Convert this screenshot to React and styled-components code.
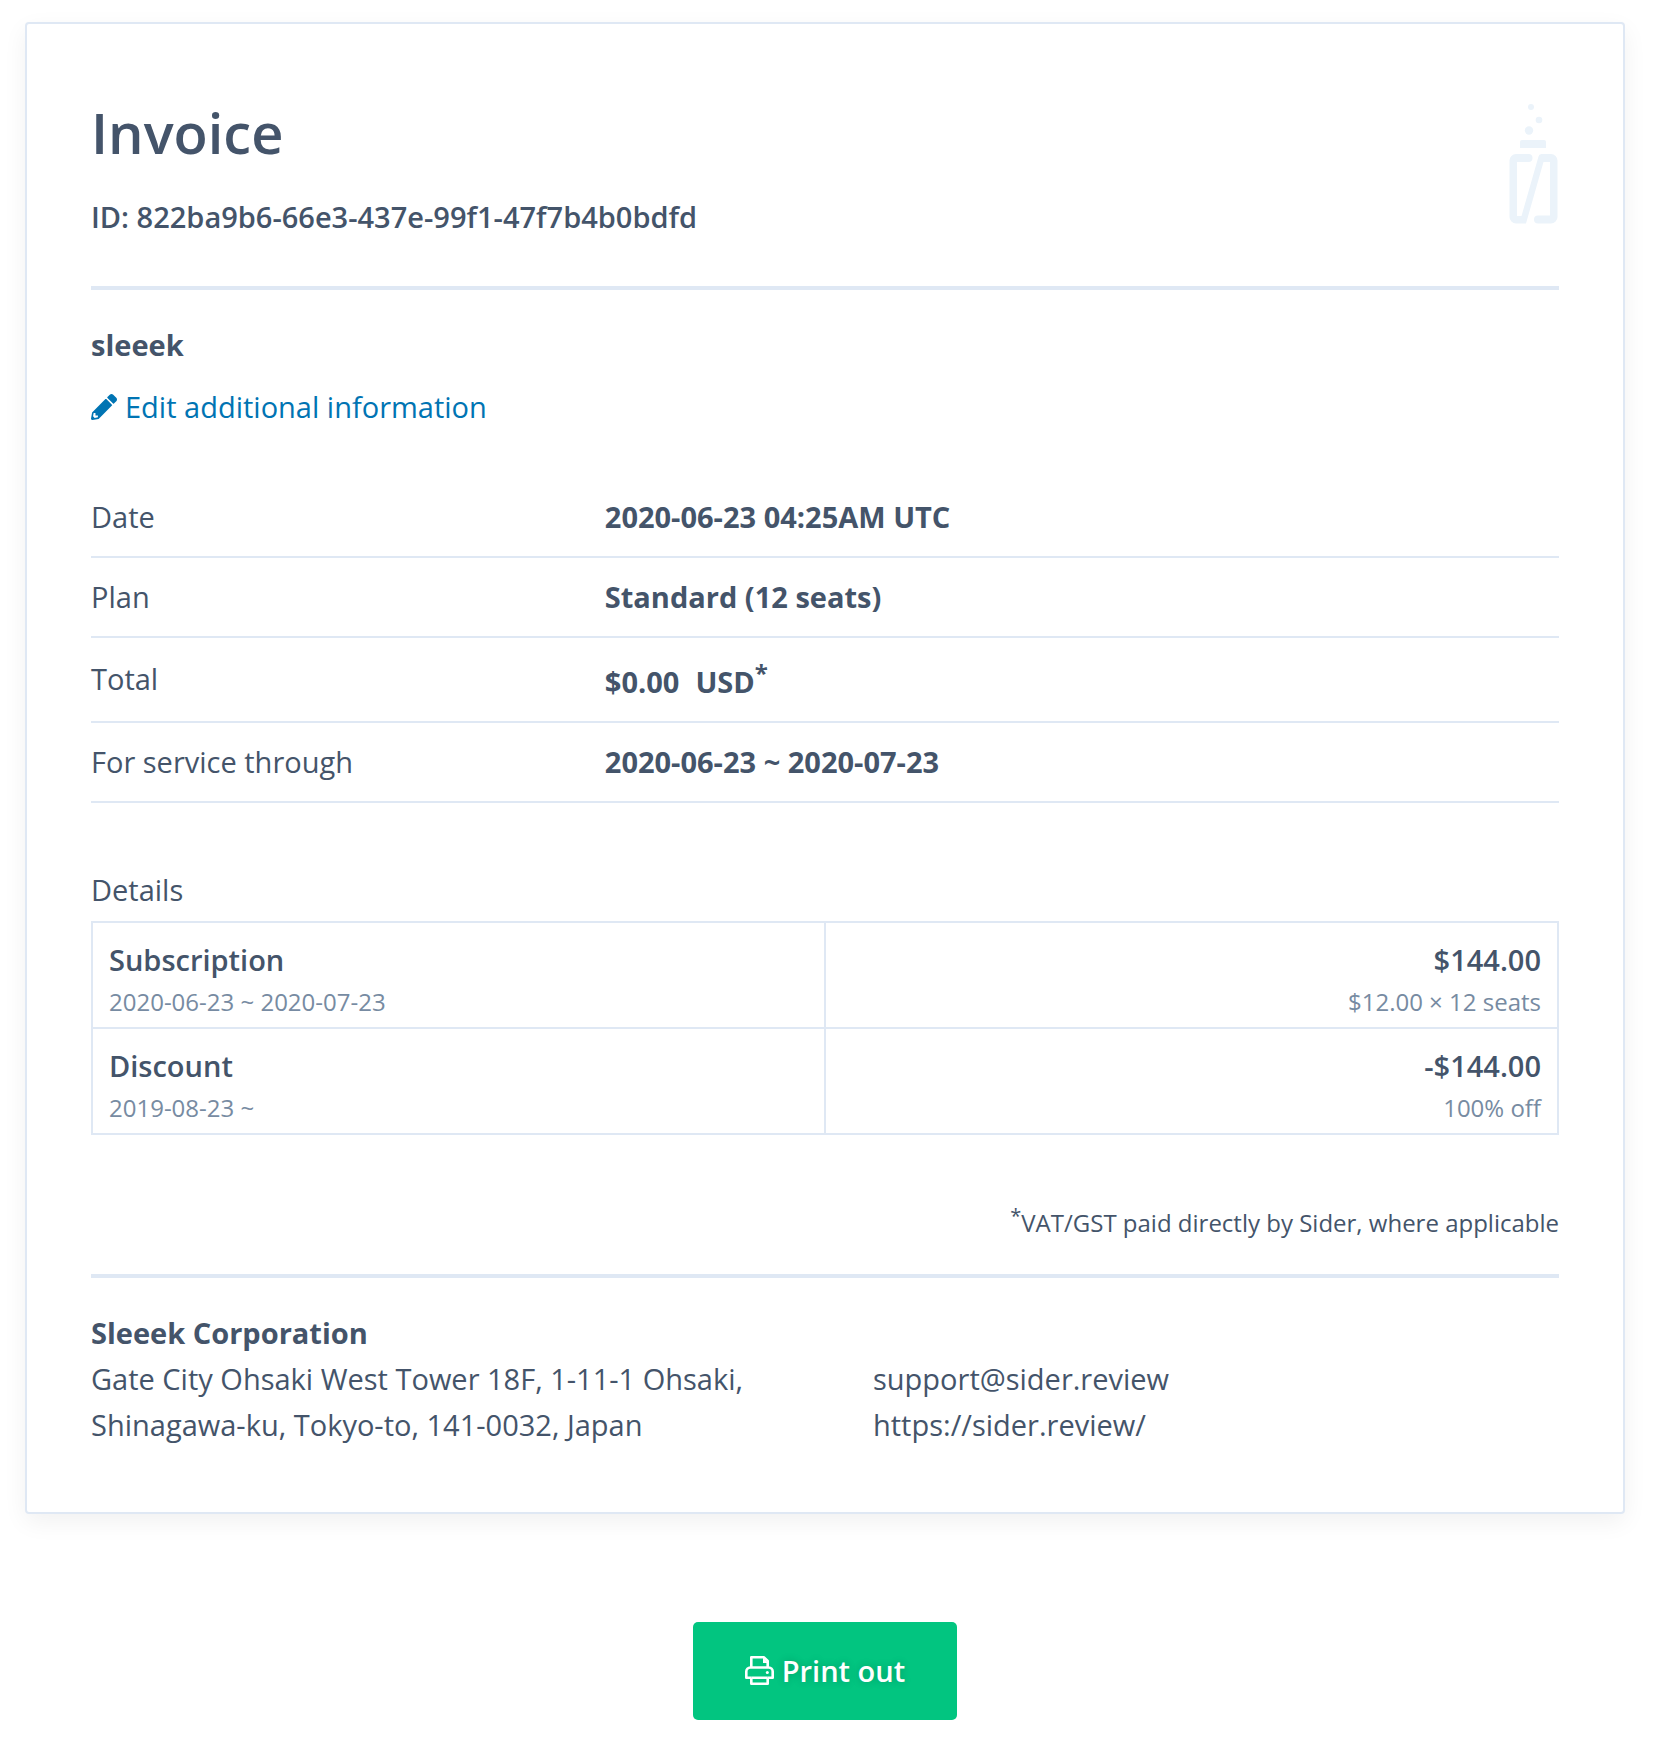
import React from "react";
import styled, { createGlobalStyle } from "styled-components";

const ink = "#44546a";
const muted = "#778ba2";
const line = "#dfe8f4";

const GlobalStyle = createGlobalStyle`
  *, *::before, *::after { box-sizing: border-box; }
  body {
    margin: 0;
    background: #fff;
    color: ${ink};
    font-family: "Open Sans", "Noto Sans", sans-serif;
    font-size: 29px;
    line-height: 46px;
  }
  h1, h2, p, dl, dd, address { margin: 0; font: inherit; }
`;

const Page = styled.main`
  display: flex;
  flex-direction: column;
  align-items: center;
  padding: 22px 35px 22px 25px;
`;

const Card = styled.article`
  width: 100%;
  padding: 78px 64px 64px;
  border: 2px solid ${line};
  border-radius: 4px;
  background: #fff;
  box-shadow: 0 8px 24px rgba(0, 0, 0, 0.06);
`;

const Header = styled.header`
  display: flex;
  justify-content: space-between;
  align-items: flex-start;
  padding-bottom: 46px;
  border-bottom: 4px solid ${line};
`;

const Title = styled.h1`
  && {
    margin-bottom: 32px;
    font-size: 56px;
    line-height: 60px;
    font-weight: 600;
  }
`;

const InvoiceId = styled.p`
  && { font-weight: 600; }
`;

const Logo = styled.svg`
  width: 50px;
  height: 122px;
  fill: #ebf3fa;
`;

const Customer = styled.section`
  display: flex;
  flex-direction: column;
  align-items: flex-start;
  gap: 16px;
  padding: 32px 0 48px;
`;

const Name = styled.h2`
  && { font-weight: 700; }
`;

const EditLink = styled.a`
  display: inline-flex;
  align-items: center;
  gap: 8px;
  color: #0074b3;
  text-decoration: none;
  svg { width: 26px; height: 26px; }
`;

const Facts = styled.dl`
  && { margin-bottom: 64px; }
`;

const Fact = styled.div`
  display: grid;
  grid-template-columns: 35% 1fr;
  align-items: center;
  padding: 16px 0;
  border-bottom: 2px solid ${line};
`;

const FactValue = styled.dd`
  && { font-weight: 700; }
`;

const Currency = styled.span`
  margin-left: 16px;
`;

const Mark = styled.sup`
  font-size: ${(p) => (p.$small ? 20 : 24)}px;
  line-height: ${(p) => (p.$small ? 32 : 38)}px;
  vertical-align: super;
`;

const DetailTable = styled.table`
  width: 100%;
  table-layout: fixed;
  border-collapse: collapse;
  caption {
    padding-bottom: 8px;
    text-align: left;
  }
`;

const Cell = styled.td`
  padding: 14px 16px 6px;
  border: 2px solid ${line};
  text-align: ${(p) => (p.$end ? "right" : "left")};
`;

const CellMain = styled.div`
  font-weight: 600;
`;

const CellNote = styled.div`
  color: ${muted};
  font-size: 24px;
  line-height: 38px;
`;

const TaxNote = styled.p`
  && {
    padding: 65px 0 32px;
    border-bottom: 4px solid ${line};
    font-size: 24px;
    line-height: 38px;
    text-align: right;
  }
`;

const Company = styled.footer`
  padding-top: 32px;
`;

const Contact = styled.div`
  display: grid;
  grid-template-columns: 1fr 1fr;
  column-gap: 96px;
`;

const ContactLink = styled.a`
  display: block;
  color: inherit;
  text-decoration: none;
`;

const PrintButton = styled.button`
  display: inline-flex;
  align-items: center;
  gap: 8px;
  margin-top: 108px;
  padding: 26px 52px;
  border: 0;
  border-radius: 5px;
  background: #02c580;
  color: #fff;
  font: inherit;
  font-weight: 600;
  text-shadow: 0 0 8px rgba(0, 0, 0, 0.2);
  cursor: pointer;
  svg { width: 29px; height: 29px; }
`;

const facts = [
  { label: "Date", value: "2020-06-23 04:25AM UTC" },
  { label: "Plan", value: "Standard (12 seats)" },
  {
    label: "Total",
    value: (
      <>
        $0.00<Currency>USD</Currency>
        <Mark>*</Mark>
      </>
    ),
  },
  { label: "For service through", value: "2020-06-23 ~ 2020-07-23" },
];

const details = [
  { item: "Subscription", period: "2020-06-23 ~ 2020-07-23", amount: "$144.00", note: "$12.00 × 12 seats" },
  { item: "Discount", period: "2019-08-23 ~", amount: "-$144.00", note: "100% off" },
];

function BottleLogo() {
  return (
    <Logo viewBox="1 -1 50 122" role="img" aria-label="Sider">
      <circle cx="23" cy="4" r="3" />
      <circle cx="31" cy="17" r="3.3" />
      <circle cx="21" cy="27.5" r="4.2" />
      <path d="M14 37h22a2 2 0 0 1 2 2v6H12v-6a2 2 0 0 1 2-2z" />
      <path d="M20.5 51a4 4 0 0 1 0 8H9v54h4.5L30.5 53.5a3 3 0 0 1 3-2.5H43a6.5 6.5 0 0 1 6.500 6.500v56.500a6.500 6.500 0 0 1-6.500 6.500H30a4 4 0 0 1 0-8h12v-53.500h-6.500L18 120.500H8a6.500 6.500 0 0 1-6.500-6.500V57.500A6.500 6.500 0 0 1 8 51z" />
    </Logo>
  );
}

function PencilIcon() {
  return (
    <svg viewBox="0 0 512 512" fill="currentColor" fillRule="evenodd" aria-hidden="true">
      <path d="M497.9 142.1l-46.1 46.1c-4.7 4.7-12.3 4.7-17 0l-111-111c-4.7-4.7-4.7-12.3 0-17l46.1-46.1c18.7-18.7 49.1-18.7 67.9 0l60.1 60.1c18.8 18.7 18.8 49.1 0 67.9z" />
      <path d="M284.2 99.8L21.6 362.4.4 483.9c-2.900 16.400 11.400 30.600 27.800 27.800l121.500-21.300 262.600-262.600c4.700-4.700 4.700-12.300 0-17l-111-111c-4.800-4.700-12.400-4.700-17.100 0zM88 424h48v36.300l-64.500 11.300-31.100-31.100L51.700 376H88v48z" />
    </svg>
  );
}

function PrinterIcon() {
  return (
    <svg viewBox="0 0 29 29" fill="none" stroke="currentColor" strokeWidth="2.6" strokeLinejoin="round" aria-hidden="true">
      <path d="M6.300 12V1.300h12.700l3.700 3.700v7" />
      <path d="M18 1.300v5.700h5z" fill="currentColor" stroke="none" />
      <path d="M6.300 21.700h-5v-6.200a4 4 0 0 1 4-4h18.400a4 4 0 0 1 4 4v6.200h-5" />
      <path d="M6.300 21.700h16.400M6.300 21.700v6h16.400v-6" />
      <circle cx="22.300" cy="16.500" r="1.500" fill="currentColor" stroke="none" />
    </svg>
  );
}

export default function App() {
  return (
    <>
      <GlobalStyle />
      <Page>
        <Card>
          <Header>
            <div>
              <Title>Invoice</Title>
              <InvoiceId>ID: 822ba9b6-66e3-437e-99f1-47f7b4b0bdfd</InvoiceId>
            </div>
            <BottleLogo />
          </Header>
          <Customer>
            <Name>sleeek</Name>
            <EditLink href="#edit">
              <PencilIcon />
              Edit additional information
            </EditLink>
          </Customer>
          <Facts>
            {facts.map((f) => (
              <Fact key={f.label}>
                <dt>{f.label}</dt>
                <FactValue>{f.value}</FactValue>
              </Fact>
            ))}
          </Facts>
          <DetailTable>
            <caption>Details</caption>
            <tbody>
              {details.map((d) => (
                <tr key={d.item}>
                  <Cell>
                    <CellMain>{d.item}</CellMain>
                    <CellNote>{d.period}</CellNote>
                  </Cell>
                  <Cell $end>
                    <CellMain>{d.amount}</CellMain>
                    <CellNote>{d.note}</CellNote>
                  </Cell>
                </tr>
              ))}
            </tbody>
          </DetailTable>
          <TaxNote>
            <Mark $small>*</Mark>VAT/GST paid directly by Sider, where applicable
          </TaxNote>
          <Company>
            <Name>Sleeek Corporation</Name>
            <Contact>
              <address>
                Gate City Ohsaki West Tower 18F, 1-11-1 Ohsaki,
                <br />
                Shinagawa-ku, Tokyo-to, 141-0032, Japan
              </address>
              <div>
                <ContactLink href="mailto:support@sider.review">support@sider.review</ContactLink>
                <ContactLink href="https://sider.review/">https://sider.review/</ContactLink>
              </div>
            </Contact>
          </Company>
        </Card>
        <PrintButton type="button">
          <PrinterIcon />
          Print out
        </PrintButton>
      </Page>
    </>
  );
}
